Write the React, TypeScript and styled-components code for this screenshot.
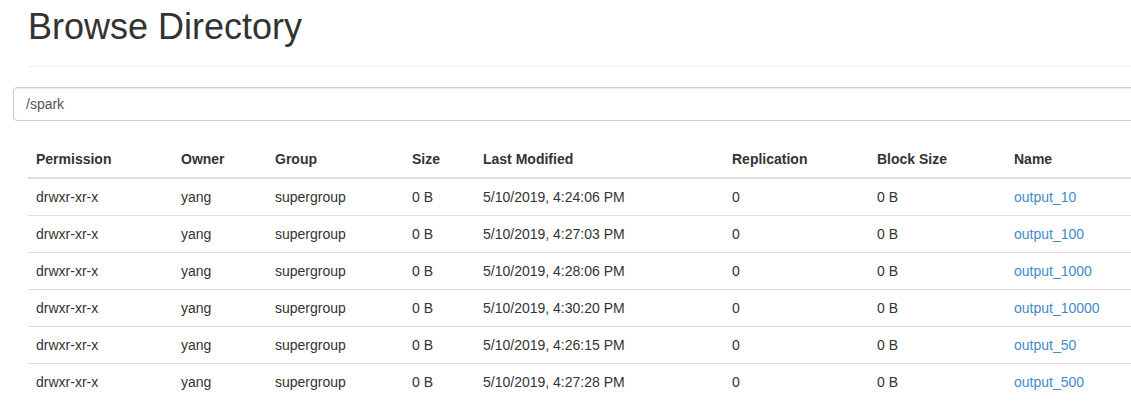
import React from "react";
import styled, { createGlobalStyle } from "styled-components";

const GlobalStyle = createGlobalStyle`
  html, body {
    margin: 0;
    padding: 0;
    overflow: hidden;
    background: #fff;
  }
  body {
    font-family: "Liberation Sans", Arial, Helvetica, sans-serif;
    font-size: 14px;
    line-height: 1.428571429;
    color: #333;
  }
  * { box-sizing: border-box; }
`;

const Page = styled.div`
  width: 1180px;
  padding-left: 13px;
`;

const PageHeader = styled.div`
  margin-left: 15px;
  padding: 7px 0 19px;
  border-bottom: 1px solid #eee;
`;

const Title = styled.h1`
  margin: 0;
  font-size: 36px;
  font-weight: 500;
  line-height: 40px;
  color: #333;
`;

const PathInput = styled.input`
  display: block;
  width: 100%;
  height: 34px;
  margin-top: 20px;
  padding: 6px 12px;
  font-family: inherit;
  font-size: 14px;
  line-height: 1.428571429;
  color: #555;
  background: #fff;
  border: 1px solid #ccc;
  border-radius: 4px;
  box-shadow: inset 0 1px 1px rgba(0, 0, 0, 0.075);
  outline: none;
`;

const Table = styled.table`
  margin: 20px 0 0 15px;
  width: 1140px;
  table-layout: fixed;
  border-collapse: collapse;
  border-spacing: 0;
`;

const Th = styled.th`
  padding: 8px;
  text-align: left;
  font-weight: bold;
  line-height: 20px;
  vertical-align: bottom;
  border-bottom: 2px solid #ddd;
  white-space: nowrap;
`;

const Td = styled.td`
  padding: 8px;
  line-height: 20px;
  vertical-align: top;
  border-top: 1px solid #ddd;
  white-space: nowrap;
`;

const Link = styled.a`
  color: #428bca;
  text-decoration: none;
`;

const widths = [145, 94, 137, 71, 249, 145, 137, 162];
const headers = [
  "Permission",
  "Owner",
  "Group",
  "Size",
  "Last Modified",
  "Replication",
  "Block Size",
  "Name",
];

const rows = [
  ["4:24:06 PM", "output_10"],
  ["4:27:03 PM", "output_100"],
  ["4:28:06 PM", "output_1000"],
  ["4:30:20 PM", "output_10000"],
  ["4:26:15 PM", "output_50"],
  ["4:27:28 PM", "output_500"],
];

export default function App() {
  return (
    <Page>
      <GlobalStyle />
      <PageHeader>
        <Title>Browse Directory</Title>
      </PageHeader>
      <PathInput defaultValue="/spark" readOnly />
      <Table>
        <colgroup>
          {widths.map((w, i) => (
            <col key={i} style={{ width: w }} />
          ))}
        </colgroup>
        <thead>
          <tr>
            {headers.map((h) => (
              <Th key={h}>{h}</Th>
            ))}
          </tr>
        </thead>
        <tbody>
          {rows.map(([time, name]) => (
            <tr key={name}>
              <Td>drwxr-xr-x</Td>
              <Td>yang</Td>
              <Td>supergroup</Td>
              <Td>0 B</Td>
              <Td>5/10/2019, {time}</Td>
              <Td>0</Td>
              <Td>0 B</Td>
              <Td>
                <Link href="#">{name}</Link>
              </Td>
            </tr>
          ))}
        </tbody>
      </Table>
    </Page>
  );
}
